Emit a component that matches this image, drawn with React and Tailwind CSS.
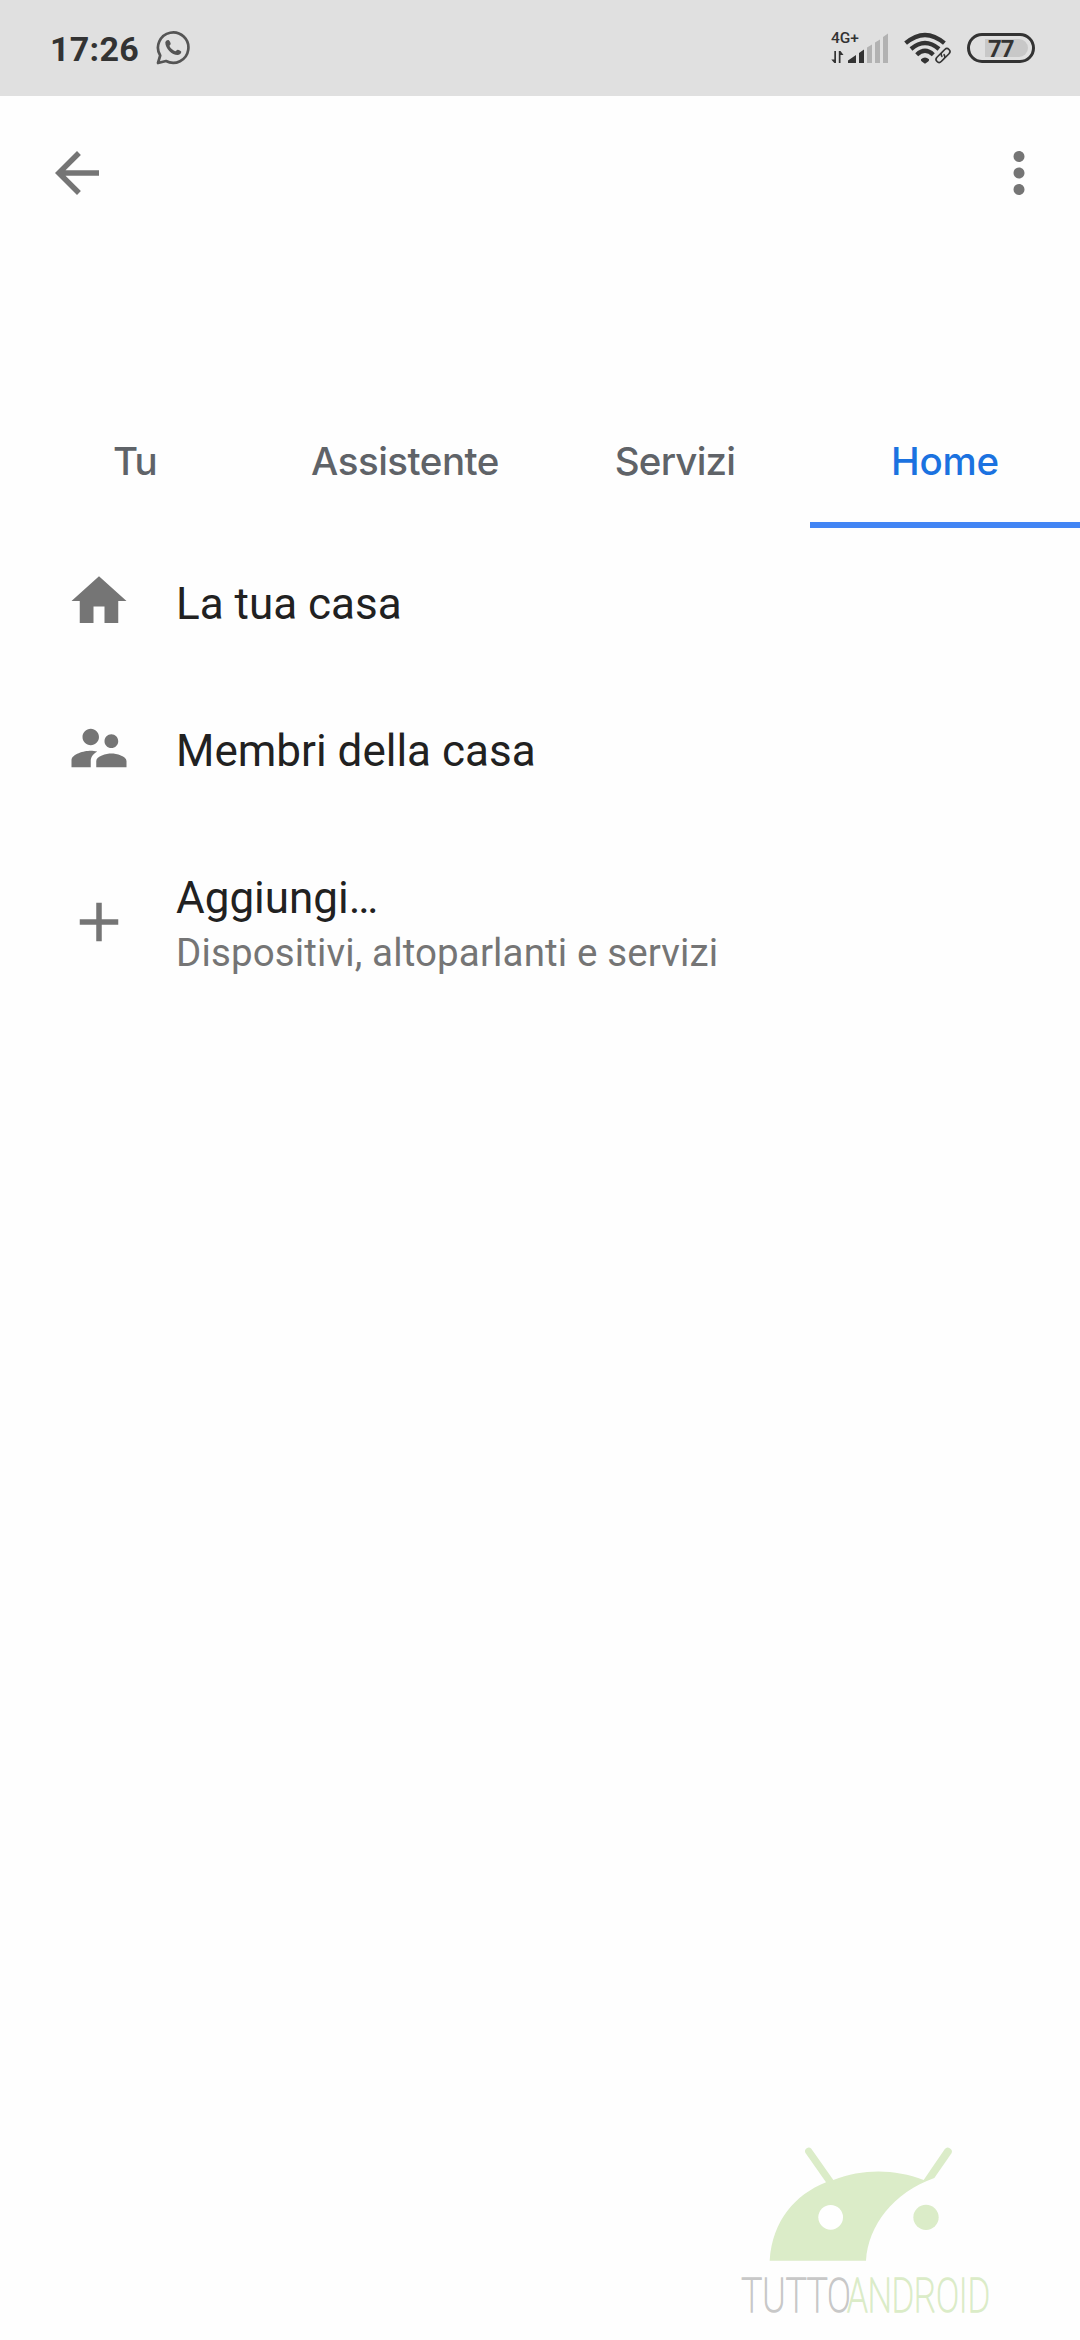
import React, { useState } from "react";

const TABS = [
  { label: "Tu", className: "tracking-[-0.8px]" },
  { label: "Assistente", className: "tracking-[-0.5px]" },
  { label: "Servizi", className: "tracking-[-0.8px]" },
  { label: "Home", className: "tracking-[-0.2px]" },
];

const ICONS = {
  back: "M20 11H7.83l5.59-5.59L12 4l-8 8 8 8 1.41-1.41L7.83 13H20v-2z",
  more: "M12 8c1.1 0 2-.9 2-2s-.9-2-2-2-2 .9-2 2 .9 2 2 2zm0 2c-1.1 0-2 .9-2 2s.9 2 2 2 2-.9 2-2-.9-2-2-2zm0 6c-1.1 0-2 .9-2 2s.9 2 2 2 2-.9 2-2-.9-2-2-2z",
  home: "M10 20v-6h4v6h5v-8h3L12 3 2 12h3v8z",
  people:
    "M16.5 12c1.38 0 2.49-1.12 2.49-2.5S17.88 7 16.5 7C15.12 7 14 8.12 14 9.5s1.12 2.5 2.5 2.5zM9 11c1.66 0 2.99-1.34 2.99-3S10.66 5 9 5C7.34 5 6 6.34 6 8s1.34 3 3 3zm7.5 3c-1.83 0-5.5.92-5.5 2.75V19h11v-2.25c0-1.83-3.67-2.75-5.5-2.75zM9 13c-2.33 0-7 1.17-7 3.5V19h7v-2.25c0-.85.33-2.34 2.37-3.47C10.5 13.1 9.66 13 9 13z",
  add: "M19 13h-6v6h-2v-6H5v-2h6V5h2v6h6v2z",
};

function Icon({ name }) {
  return (
    <svg viewBox="0 0 24 24" className="size-[66px] shrink-0 fill-[#757575]">
      <path d={ICONS[name]} />
    </svg>
  );
}

function WhatsAppIcon() {
  return (
    <svg viewBox="0 0 36 36" className="ml-4 size-9" fill="none">
      <path
        d="M3 33l2.2-7.5A15.2 15.2 0 1 1 11 31z"
        stroke="#555"
        strokeWidth="2.7"
        strokeLinejoin="round"
      />
      <path
        d="M10.3 12.2c.9-2 2.7-2.8 3.8-1.8.8.9 1.5 2.3 1.6 3.4 0 1-1.4 1.5-1.2 2.3 1 2.3 3.2 4.2 5.7 5.1.9.1 1.6-1.6 2.6-1.5 1.3.2 2.7 1 3.4 1.9.5 1.3-1.3 3.2-3.2 3.5-5.7.3-12.9-6.6-12.7-12.9z"
        fill="#555"
      />
    </svg>
  );
}

function Signal() {
  return (
    <div className="flex w-[58px] flex-col">
      <span className="h-[13px] text-[15.5px] leading-[13px] font-medium">4G+</span>
      <svg viewBox="0 13 58 19" className="h-[19px] w-[58px] overflow-visible fill-[#333]">
        <path d="M3.3 19H5v12H3.3L.3 27.4h3zM7.8 31V19h1.7l3 4H9.5v8z" />
        <path d="M17 31v-2.4l8-5.6v8zM28 31V21l5-3.4V31z" />
        <path d="M36 31V15.5l5-2.9V31zM44 31V10.5l5-3V31zM52 31V5l5-3.5V31z" fill="#b2b2b2" />
      </svg>
    </div>
  );
}

function Wifi() {
  return (
    <svg viewBox="0 0 50 34" className="h-[34px] w-[50px]" fill="none" stroke="#333">
      <path d="M2.6 12.2Q22 -4.4 41.4 12.2" strokeWidth="4.3" />
      <path d="M8 18Q22 6 36 18" strokeWidth="4.3" />
      <path d="M13.7 23.8Q22 15.9 30.3 23.8" strokeWidth="4.3" />
      <path d="M18 28.2q4-3.4 8 0 .4 1.2-.8 2.2L22 32.8l-3.2-2.4q-1.2-1-.8-2.2z" fill="#333" stroke="none" />
      <g strokeWidth="1.6" transform="rotate(-45 40 24.5)">
        <path d="M40.5 21.5h-6a3 3 0 0 0 0 6h4a3 3 0 0 0 2.8-3.5" />
        <path d="M39.5 27.5h6a3 3 0 0 0 0-6h-4a3 3 0 0 0-2.8 3.5" />
      </g>
    </svg>
  );
}

function Battery({ level }) {
  return (
    <div className="flex h-[30px] w-[68px] items-center rounded-full border-3 border-[#333] pl-[15px]">
      <div className="flex h-[18px] w-[43px] items-center rounded-r-full bg-[#c8c8c8] pt-0.5 pl-[3px] text-2xl leading-none font-bold tracking-[-0.9px]">
        {level}
      </div>
    </div>
  );
}

function StatusBar() {
  return (
    <div className="flex h-24 items-center justify-between bg-[#e0e0e0] pr-[45px] pl-[50px] text-[#333]">
      <div className="flex items-center">
        <span className="pt-0.5 text-[34px] leading-none font-bold tracking-[0.3px]">17:26</span>
        <WhatsAppIcon />
      </div>
      <div className="flex items-center">
        <Signal />
        <div className="ml-[14px]">
          <Wifi />
        </div>
        <div className="ml-[14px]">
          <Battery level={77} />
        </div>
      </div>
    </div>
  );
}

function Row({ icon, title, subtitle }) {
  return (
    <li className={`flex items-center ${subtitle ? "pt-1" : ""}`}>
      <Icon name={icon} />
      <div className="ml-11 flex flex-col pt-1.5">
        <span className="text-[44px] leading-[52px] text-[#212121]">{title}</span>
        {subtitle && (
          <span className="mt-1 text-[38.5px] leading-[50px] tracking-[0.13px] text-[#757575]">{subtitle}</span>
        )}
      </div>
    </li>
  );
}

function Watermark() {
  return (
    <svg viewBox="0 0 900 660" className="mt-auto mr-[60px] h-[220px] w-[300px] self-end">
      <g fill="#dbecc8">
        <path d="M149 422C158 300 225 225 318 187L256 98A11 11 0 0 1 274 86L340 180C430 145 525 147 611 180L674 88A12 12 0 0 1 695 99L643 174C520 218 445 315 438 422z" />
        <circle cx="618" cy="292" r="38" />
      </g>
      <circle cx="332" cy="292" r="37" fill="#fff" />
      <g fontSize="147" className="font-thin" strokeWidth="4.5">
        <text x="64" y="577" textLength="328" lengthAdjust="spacingAndGlyphs" fill="#c8c8c8" stroke="#c8c8c8">
          TUTTO
        </text>
        <text x="382" y="577" textLength="428" lengthAdjust="spacingAndGlyphs" fill="#dbecc8" stroke="#dbecc8">
          ANDROID
        </text>
      </g>
    </svg>
  );
}

export default function App() {
  const [active, setActive] = useState("Home");

  return (
    <div className="flex min-h-screen w-full flex-col bg-[#fefefe] font-[Roboto,sans-serif]">
      <StatusBar />

      <header className="flex h-[154px] items-center justify-between pr-7 pl-11">
        <button aria-label="Indietro">
          <Icon name="back" />
        </button>
        <button aria-label="Altro">
          <Icon name="more" />
        </button>
      </header>

      <nav className="mt-[146px] grid h-[132px] grid-cols-4 font-[Inter,sans-serif]">
        {TABS.map((tab) => (
          <button
            key={tab.label}
            onClick={() => setActive(tab.label)}
            className={`border-b-6 pt-1.5 text-[38.5px] font-medium ${tab.className} ${
              active === tab.label ? "border-[#4285f4] text-[#1b72e0]" : "border-transparent text-[#5f6368]"
            }`}
          >
            {tab.label}
          </button>
        ))}
      </nav>

      <ul className="mt-10 flex flex-col gap-[81px] pl-[66px]">
        <Row icon="home" title="La tua casa" />
        <Row icon="people" title="Membri della casa" />
        <Row icon="add" title="Aggiungi…" subtitle="Dispositivi, altoparlanti e servizi" />
      </ul>

      <Watermark />
    </div>
  );
}
